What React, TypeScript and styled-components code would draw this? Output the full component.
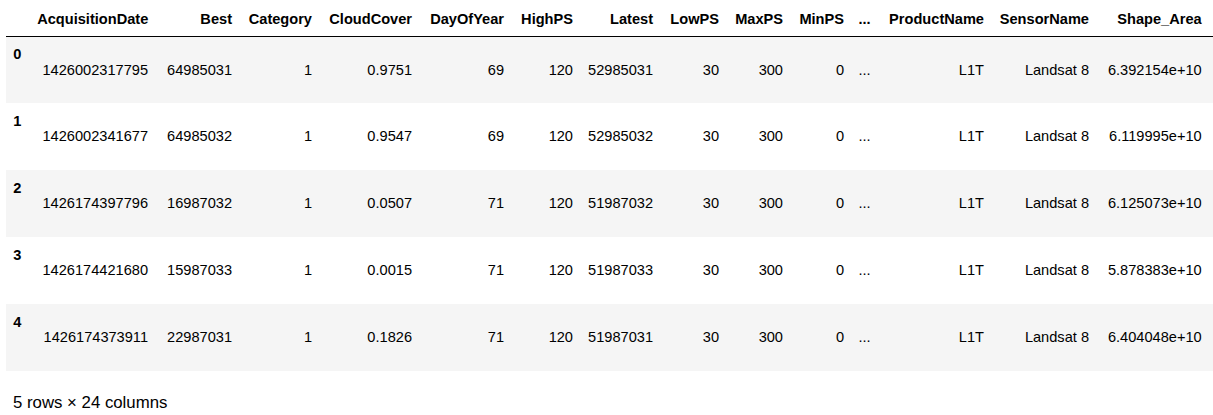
import React from "react";
import styled, { createGlobalStyle } from "styled-components";

const Global = createGlobalStyle`
  html, body { margin: 0; padding: 0; background: #ffffff; }
  body { font-family: "Liberation Sans", Arial, sans-serif; color: #000000; }
`;

const Wrap = styled.div`
  padding: 0 0 0 6px;
`;

const Table = styled.table`
  width: 1207px;
  table-layout: fixed;
  border-collapse: collapse;
  border-spacing: 0;
  font-family: "Liberation Sans", Arial, sans-serif;
  font-size: 14.6px;
  line-height: 16.5px;
  color: #000;
`;

const Col = styled.col<{ $w?: number }>`
  width: ${(p) => (p.$w ? `${p.$w}px` : "auto")};
`;

const HeadRow = styled.tr`
  border-bottom: 1px solid #000;
`;

const HeadCell = styled.th`
  font-weight: bold;
  text-align: right;
  vertical-align: bottom;
  padding: 11px 7.2px 8px;
  white-space: nowrap;
  &:last-child { padding-right: 11.3px; }
`;

const BodyRow = styled.tr<{ $striped: boolean }>`
  height: 67px;
  background: ${(p) => (p.$striped ? "#f5f5f5" : "transparent")};
`;

const IndexCell = styled.th`
  font-weight: bold;
  text-align: left;
  vertical-align: top;
  padding: 9.5px 7.2px 7.2px;
`;

const Cell = styled.td`
  text-align: right;
  vertical-align: middle;
  padding: 7.2px;
  white-space: nowrap;
  &:last-child { padding-right: 11.3px; }
`;

const Footer = styled.p`
  margin: 21.5px 0 0 7px;
  font-family: "Liberation Sans", Arial, sans-serif;
  font-size: 16.8px;
  line-height: 20px;
  color: #000;
`;

const columns = [
  "AcquisitionDate",
  "Best",
  "Category",
  "CloudCover",
  "DayOfYear",
  "HighPS",
  "Latest",
  "LowPS",
  "MaxPS",
  "MinPS",
  "...",
  "ProductName",
  "SensorName",
  "Shape_Area",
];

const widths = [24, 125.2, 84, 80, 100, 92, 69, 80, 66, 64, 61, 26, 114, 105];

const rows: string[][] = [
  ["1426002317795", "64985031", "1", "0.9751", "69", "120", "52985031", "30", "300", "0", "...", "L1T", "Landsat 8", "6.392154e+10"],
  ["1426002341677", "64985032", "1", "0.9547", "69", "120", "52985032", "30", "300", "0", "...", "L1T", "Landsat 8", "6.119995e+10"],
  ["1426174397796", "16987032", "1", "0.0507", "71", "120", "51987032", "30", "300", "0", "...", "L1T", "Landsat 8", "6.125073e+10"],
  ["1426174421680", "15987033", "1", "0.0015", "71", "120", "51987033", "30", "300", "0", "...", "L1T", "Landsat 8", "5.878383e+10"],
  ["1426174373911", "22987031", "1", "0.1826", "71", "120", "51987031", "30", "300", "0", "...", "L1T", "Landsat 8", "6.404048e+10"],
];

export default function App() {
  return (
    <Wrap>
      <Global />
      <Table>
        <colgroup>
          {widths.map((w, i) => (
            <Col key={i} $w={w} />
          ))}
          <Col />
        </colgroup>
        <thead>
          <HeadRow>
            <HeadCell />
            {columns.map((c) => (
              <HeadCell key={c}>{c}</HeadCell>
            ))}
          </HeadRow>
        </thead>
        <tbody>
          {rows.map((r, i) => (
            <BodyRow key={i} $striped={i % 2 === 0}>
              <IndexCell>{i}</IndexCell>
              {r.map((v, j) => (
                <Cell key={j}>{v}</Cell>
              ))}
            </BodyRow>
          ))}
        </tbody>
      </Table>
      <Footer>5 rows × 24 columns</Footer>
    </Wrap>
  );
}
